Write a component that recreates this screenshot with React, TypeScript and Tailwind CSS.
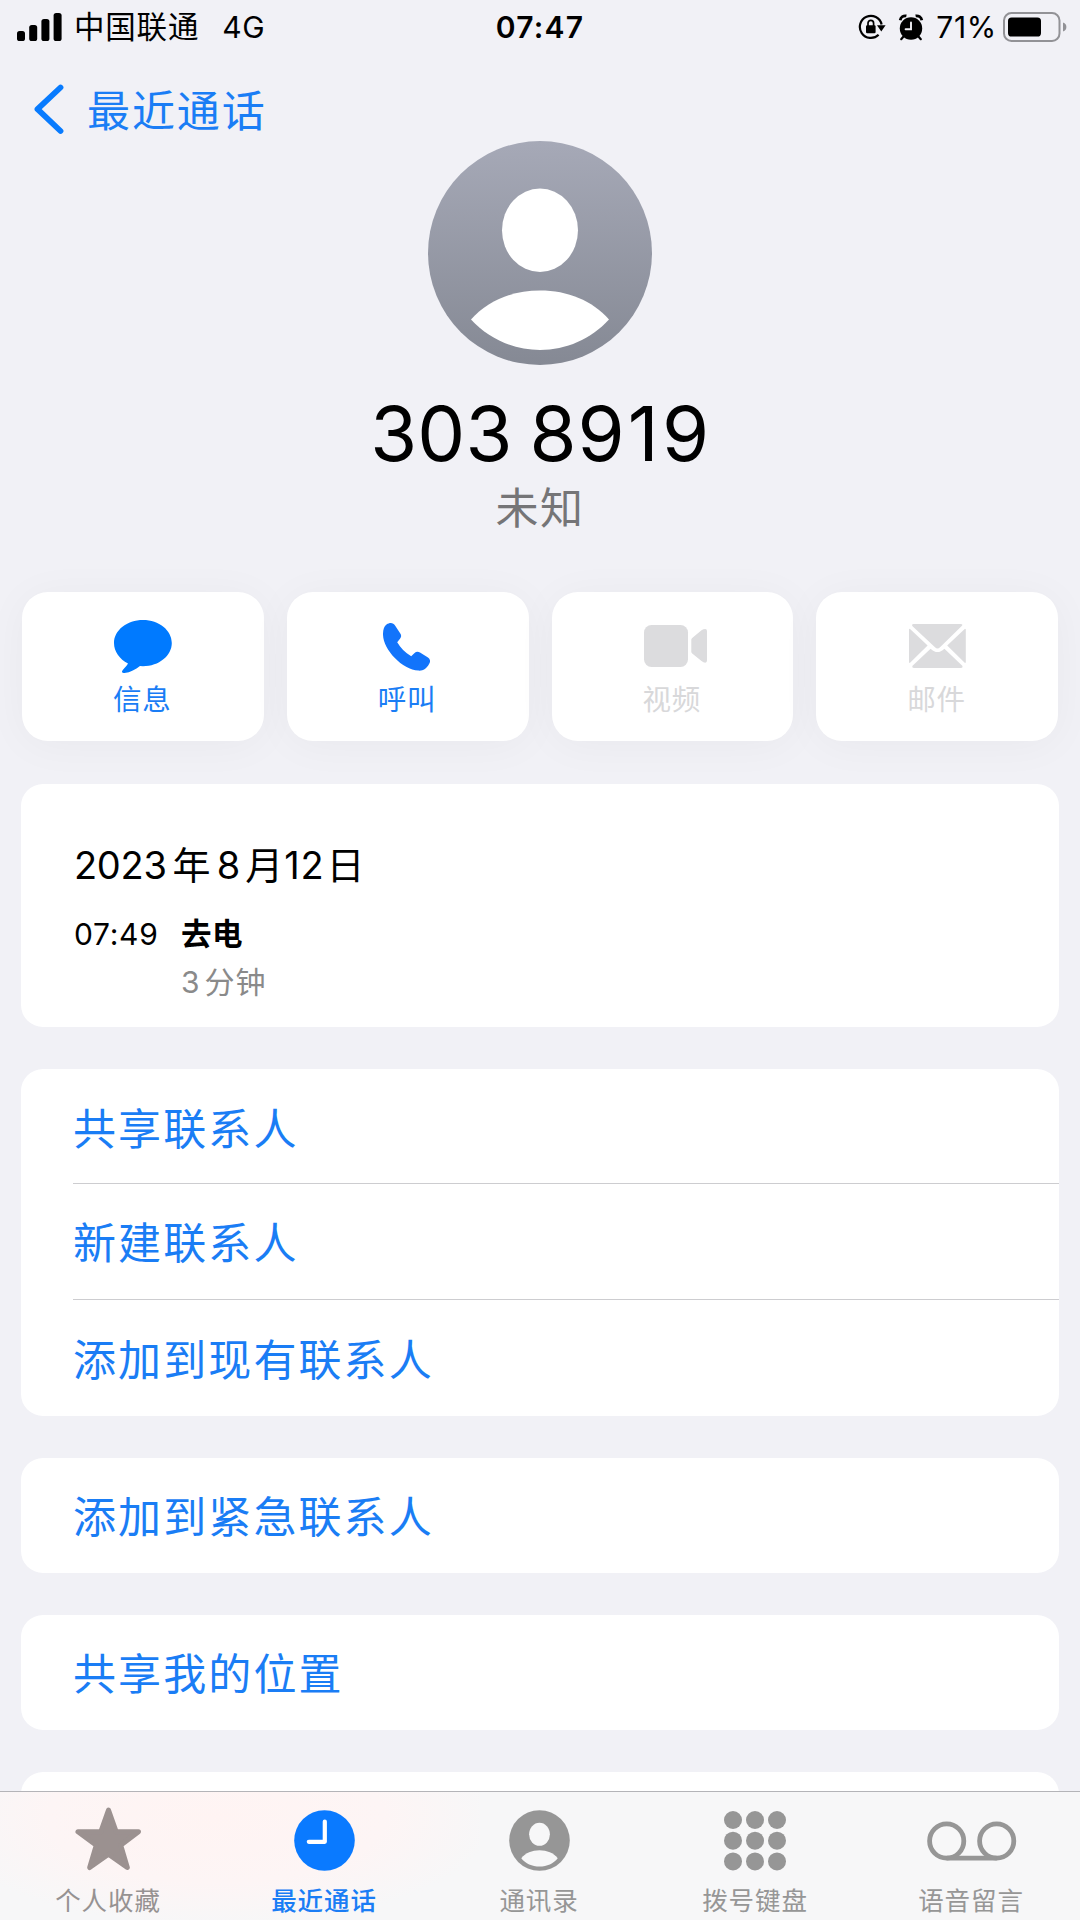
import React from "react";

const latin = "font-[Inter,'Noto_Sans_CJK_SC',sans-serif]";

function SignalIcon() {
  return (
    <svg width="45" height="28" viewBox="0 0 45 28" fill="#000">
      <rect x="0" y="18" width="8" height="10" rx="2.6" />
      <rect x="12.2" y="12" width="8" height="16" rx="2.6" />
      <rect x="24.4" y="6" width="8" height="22" rx="2.6" />
      <rect x="36.6" y="0" width="8" height="28" rx="2.6" />
    </svg>
  );
}

function RotationLockIcon() {
  return (
    <svg width="28" height="26" viewBox="0 0 28 26" fill="none">
      <path d="M20.6 20.7A11 11 0 1 1 23.6 10.5" stroke="#000" strokeWidth="2.2" />
      <path d="M19 11.2H27.6L23.3 17.6Z" fill="#000" />
      <rect x="8" y="11.2" width="9.6" height="8" rx="1.2" fill="#000" />
      <path d="M10 12V9.2a2.8 2.8 0 0 1 5.6 0V12" stroke="#000" strokeWidth="1.7" />
    </svg>
  );
}

function AlarmIcon() {
  return (
    <svg width="26" height="27" viewBox="0 0 26 27" fill="none">
      <circle cx="13" cy="14.5" r="11.2" fill="#000" />
      <path d="M2.2 6.2A5.2 5.2 0 0 1 8.4 1.9M23.8 6.2A5.2 5.2 0 0 0 17.6 1.9" stroke="#000" strokeWidth="2.8" />
      <path d="M5.5 22.5L3.2 25.2M20.5 22.5L22.8 25.2" stroke="#000" strokeWidth="2.2" strokeLinecap="round" />
      <path d="M13 8.4V15.2H7.6" stroke="#f2f1f6" strokeWidth="1.9" strokeLinecap="round" />
    </svg>
  );
}

function BatteryIcon() {
  return (
    <svg width="64" height="30" viewBox="0 0 64 30" fill="none">
      <rect x="1" y="1" width="55.5" height="28" rx="7.5" stroke="#929296" strokeWidth="2" />
      <rect x="5" y="5.5" width="33" height="19" rx="3.6" fill="#000" />
      <path d="M60 10.5c2.4.7 3.4 2.3 3.4 4.5s-1 3.8-3.4 4.5z" fill="#929296" />
    </svg>
  );
}

function StatusBar() {
  return (
    <header className="grid h-[54px] grid-cols-[1fr_auto_1fr] items-center text-black">
      <div className="flex items-center pl-[17px]">
        <SignalIcon />
        <span className="ml-[12px] text-[30.5px] leading-[54px] tracking-[0.8px]">中国联通</span>
        <span className="ml-[23px] text-[30px] leading-[54px] tracking-[0.6px]">4G</span>
      </div>
      <span className="text-[30px] font-semibold leading-[54px] tracking-[1.2px]">07:47</span>
      <div className="flex items-center justify-end pr-[13px]">
        <RotationLockIcon />
        <div className="ml-[12px]">
          <AlarmIcon />
        </div>
        <span className="ml-[12px] text-[30px] leading-[54px] tracking-[0.7px]">71%</span>
        <div className="ml-[6px]">
          <BatteryIcon />
        </div>
      </div>
    </header>
  );
}

function NavBar() {
  return (
    <nav className="flex h-[87px] items-start pl-[33px]">
      <svg className="mt-[30px]" width="31" height="51" viewBox="0 0 31 51" fill="none">
        <path d="M27.5 3.5L4.5 25.2L27.5 47" stroke="#087bfe" strokeWidth="5.8" strokeLinecap="round" strokeLinejoin="round" />
      </svg>
      <span className="ml-[23px] mt-[27px] text-[43px] leading-[60px] tracking-[1.9px] text-[#1a7df5]">最近通话</span>
    </nav>
  );
}

function Avatar() {
  return (
    <svg width="224" height="224" viewBox="0 0 224 224">
      <defs>
        <linearGradient id="avatarFill" x1="0" y1="0" x2="0" y2="1">
          <stop offset="0" stopColor="#a6a9b7" />
          <stop offset="1" stopColor="#858994" />
        </linearGradient>
      </defs>
      <circle cx="112" cy="112" r="112" fill="url(#avatarFill)" />
      <ellipse cx="112" cy="89.3" rx="38" ry="41.7" fill="#fff" />
      <path d="M43 178.5C60 159.5 84 149.5 112 149.5s52 10 69 29C163 198 138 209 112 209S61 198 43 178.5Z" fill="#fff" />
    </svg>
  );
}

const MessageIcon = () => (
  <svg width="58" height="53" viewBox="0 0 58 53" fill="#007aff">
    <path d="M29 0C45 0 57.8 10.3 57.8 23S45 46.2 29 46.2L26 46C21.5 49.5 16.5 52.4 10.5 53C8 53.2 7.2 51.9 8.8 50C10.8 47.8 12.7 46 14 43.6C5.5 39 0 31.5 0 23C0 10.3 13 0 29 0Z" />
  </svg>
);

const PhoneIcon = () => (
  <svg width="47" height="48" viewBox="0 0 47 48" fill="#1274fb">
    <path d="M3.5 1.6C7 -.8 10.3 -.3 12.2 2.7L17.3 10.6C18.6 12.7 18.4 14 17 15.8L14.2 19.2C17.5 24.8 22 29.5 28.2 33.2L31.3 30.2C33.2 28.6 35 28.3 37 29.6L44.6 34.3C47.3 36 47.6 38.2 46.2 40.8C43.5 46 40 47.9 35.5 47.6C19 46.5 -.5 26 0 10.5C.2 6.5 1.2 3.2 3.5 1.6Z" />
  </svg>
);

const VideoIcon = () => (
  <svg width="64" height="42" viewBox="0 0 64 42" fill="#dcdcde">
    <rect x="0" y="0" width="44" height="42" rx="7.5" />
    <path d="M47.3 14.5Q47.5 13.5 48.2 12.9L57.5 5.3Q59.5 4 61.3 4Q63 4 63 6V35.5Q63 37.6 61.3 37.7Q59.5 37.7 57.5 36L48.2 28.5Q47.5 27.8 47.3 27Z" />
  </svg>
);

const MailIcon = () => (
  <svg width="57" height="44" viewBox="0 0 57 46" preserveAspectRatio="none" fill="#dcdcde">
    <path d="M4.5 0H52Q54 0 53.2 1.6L31 24.3Q28.5 26.8 26 24.3L3.3 2Q2.5 0 4.5 0Z" />
    <path d="M0 5.6L.8 5L18.6 22.5L.8 40.8L0 40.2ZM56.8 5.6L56 5L38.2 22.5L56 40.8L56.8 40.2Z" />
    <path d="M3.3 44L21.6 25.8C26.5 30.5 30.5 30.5 35.4 25.8L53.5 44Q54 46 52 46H5Q2.8 46 3.3 44Z" />
  </svg>
);

const actions = [
  { label: "信息", icon: <MessageIcon />, place: "mt-[28px]", color: "text-[#1a7df5]" },
  { label: "呼叫", icon: <PhoneIcon />, place: "mt-[31px] mr-[2px]", color: "text-[#1a7df5]" },
  { label: "视频", icon: <VideoIcon />, place: "mt-[33px] ml-[7px]", color: "text-[#d8d8da]" },
  { label: "邮件", icon: <MailIcon />, place: "mt-[32px]", color: "text-[#d8d8da]" },
];

function Actions() {
  return (
    <div className="mx-[22px] mt-[47px] grid grid-cols-4 gap-[23px]">
      {actions.map((a) => (
        <button
          key={a.label}
          className="flex h-[149px] flex-col items-center rounded-[26px] bg-white shadow-[0_4px_44px_rgba(0,0,0,0.04)]"
        >
          <span className="flex h-[89px] items-start">
            <span className={a.place}>{a.icon}</span>
          </span>
          <span className={`mr-[1px] text-[28.5px] leading-[38px] tracking-[0.9px] ${a.color}`}>{a.label}</span>
        </button>
      ))}
    </div>
  );
}

function CallCard() {
  return (
    <section className="mx-[21px] mt-[43px] h-[243px] rounded-[22px] bg-white pl-[53px] pt-[55px] text-black">
      <div className="flex text-[38px] leading-[52px]">
        <span className="tracking-[-0.3px]">2023</span>
        <span className="ml-[6px]">年</span>
        <span className="ml-[6px]">8</span>
        <span className="ml-[5px]">月</span>
        <span className="ml-[1px] tracking-[0.8px]">12</span>
        <span className="ml-[2px]">日</span>
      </div>
      <div className="mt-[23px] flex">
        <span className="w-[107px] text-[30px] leading-[40px] tracking-[0.7px]">07:49</span>
        <span className="text-[30.5px] font-bold leading-[40px] tracking-[0.6px]">去电</span>
      </div>
      <div className="mt-[8px] flex pl-[107px] text-[30px] leading-[40px] text-[#8a8a8a]">
        <span>3</span>
        <span className="ml-[5px] tracking-[1px]">分钟</span>
      </div>
    </section>
  );
}

const rowHeights = [
  "h-[114px] leading-[120px]",
  "h-[116px] border-t leading-[119px]",
  "h-[117px] border-t leading-[120px]",
];

function ListGroup({ rows }: { rows: string[] }) {
  return (
    <section className="mx-[21px] mt-[42px] rounded-[22px] bg-white pl-[52px]">
      {rows.map((r, i) => (
        <div key={r} className={`border-[#cdcdd0] text-[43px] tracking-[2.1px] text-[#1a7df5] ${rowHeights[i]}`}>
          {r}
        </div>
      ))}
    </section>
  );
}

function SingleRow({ label }: { label: string }) {
  return (
    <section className="mx-[21px] h-[115px] rounded-[22px] bg-white pl-[52px] text-[43px] leading-[119px] tracking-[2.1px] text-[#1a7df5]">
      {label}
    </section>
  );
}

const StarIcon = () => (
  <svg width="67" height="64" viewBox="0 0 67 64" fill="#9b9190" stroke="#9b9190" strokeWidth="5" strokeLinejoin="round">
    <path d="M33.5 3L41.2 24.8H63.5L45.7 38.3L52.3 60.5L33.5 47.2L14.7 60.5L21.3 38.3L3 24.8H25.8Z" />
  </svg>
);

const ClockIcon = () => (
  <svg width="61" height="61" viewBox="0 0 61 61" fill="none">
    <circle cx="30.5" cy="30.5" r="30.3" fill="#0a7aff" />
    <path d="M30.8 11.5V31.8H14.8" stroke="#fff" strokeWidth="4.2" strokeLinecap="round" strokeLinejoin="round" />
  </svg>
);

const PersonIcon = () => (
  <svg width="61" height="61" viewBox="0 0 61 61">
    <circle cx="30.5" cy="30.5" r="30.3" fill="#969696" />
    <ellipse cx="30.5" cy="24.3" rx="10.4" ry="11.5" fill="#f7f7f8" />
    <path d="M12.3 48.2C16.5 43 23 40.3 30.5 40.3S44.5 43 48.7 48.2C44.5 53.5 38 56.5 30.5 56.5S16.5 53.5 12.3 48.2Z" fill="#f7f7f8" />
  </svg>
);

const KeypadIcon = () => (
  <svg width="62" height="60" viewBox="0 0 62 60" fill="#969696">
    {[9, 29.7, 50.4].map((y) => [9, 31, 53].map((x) => <circle key={`${x}-${y}`} cx={x} cy={y} r="9" />))}
  </svg>
);

const VoicemailIcon = () => (
  <svg width="90" height="40" viewBox="0 0 90 40" fill="none" stroke="#969696" strokeWidth="4.8">
    <circle cx="19.7" cy="20" r="17.1" />
    <circle cx="69.7" cy="20" r="17.1" />
    <path d="M19.7 37.1H69.7" />
  </svg>
);

const tabs = [
  { label: "个人收藏", icon: <StarIcon />, color: "text-[#969292]", pad: "pt-[15px]" },
  { label: "最近通话", icon: <ClockIcon />, color: "text-[#1a7df5] font-medium", pad: "pt-[18px]" },
  { label: "通讯录", icon: <PersonIcon />, color: "text-[#969696] mr-[2px]", pad: "pt-[18px] pr-[2px]" },
  { label: "拨号键盘", icon: <KeypadIcon />, color: "text-[#969696] mr-[2px]", pad: "pt-[19px] pr-[2px]" },
  { label: "语音留言", icon: <VoicemailIcon />, color: "text-[#969696] mr-[2px]", pad: "pt-[29px]" },
];

function TabBar() {
  return (
    <footer className="absolute inset-x-0 bottom-0 grid h-[129px] grid-cols-5 border-t border-[#b4b4b8] bg-[#f7f7f8]">
      <div className="pointer-events-none absolute left-0 top-0 h-full w-[480px] bg-[radial-gradient(ellipse_at_45%_20%,#fff4f3_0%,#fdf5f5_45%,transparent_75%)]" />
      {tabs.map((t) => (
        <button key={t.label} className="relative flex flex-col items-center">
          <span className={`flex h-[91px] items-start ${t.pad}`}>{t.icon}</span>
          <span className={`text-[25.5px] leading-[36px] tracking-[0.9px] ${t.color}`}>{t.label}</span>
        </button>
      ))}
    </footer>
  );
}

export default function App() {
  return (
    <main className={`relative flex h-[1920px] w-[1080px] flex-col overflow-hidden bg-[#f1f1f6] ${latin}`}>
      <StatusBar />
      <NavBar />
      <div className="flex flex-col items-center">
        <Avatar />
        <h1 className="mt-[23px] flex gap-[17px] text-[76px] leading-[90px] text-black [font-kerning:none]">
          <span className="tracking-[0.2px]">303</span>
          <span className="tracking-[0.8px]">
            8<span className="tracking-[3.2px]">91</span>9
          </span>
        </h1>
        <p className="mt-[2px] h-[65px] text-[43px] leading-[56px] tracking-[1.6px] text-[#757577]">未知</p>
      </div>
      <Actions />
      <CallCard />
      <ListGroup rows={["共享联系人", "新建联系人", "添加到现有联系人"]} />
      <div className="mt-[42px] flex flex-col gap-[42px]">
        <SingleRow label="添加到紧急联系人" />
        <SingleRow label="共享我的位置" />
      </div>
      <section className="mx-[21px] mt-[42px] h-[148px] shrink-0 rounded-[22px] bg-white" />
      <TabBar />
    </main>
  );
}
